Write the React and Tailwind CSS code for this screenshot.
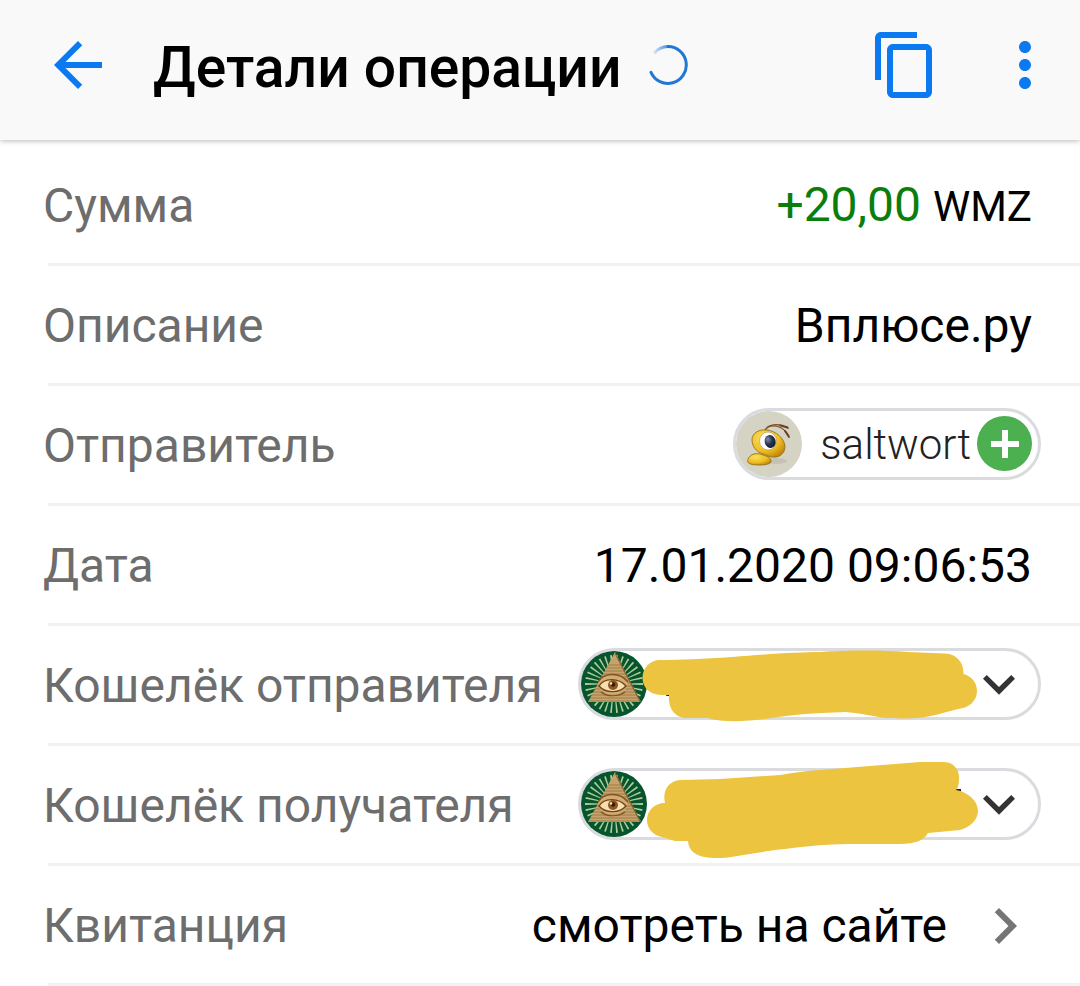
import React from 'react';
import {
  MdArrowBack,
  MdContentCopy,
  MdMoreVert,
  MdChevronRight,
  MdExpandMore,
} from 'react-icons/md';

const rays = Array.from({ length: 30 }, (_, i) => i * 12 + 6);
const courses = [14, 17, 20, 23, 26, 29, 32, 35, 38, 41, 44, 47, 50];

function Spinner() {
  return (
    <svg viewBox="0 0 42 42" className="size-[42px]" fill="none" role="img" aria-label="Загрузка">
      <defs>
        <linearGradient id="tail" gradientUnits="userSpaceOnUse" x1="6" y1="10" x2="26" y2="3">
          <stop offset="0" stopColor="#1f78d6" stopOpacity="0.1" />
          <stop offset="1" stopColor="#1f78d6" />
        </linearGradient>
      </defs>
      <path d="M7 9.5A18.4 18.4 0 0 1 21 2.6" stroke="url(#tail)" strokeWidth="3" />
      <path d="M21 2.6A18.4 18.4 0 1 1 4 28.3" stroke="#1f78d6" strokeWidth="3" strokeLinecap="round" />
    </svg>
  );
}

function BeeAvatar() {
  return (
    <svg viewBox="0 0 66 66" className="size-[66px] shrink-0" aria-hidden="true">
      <defs>
        <radialGradient id="beeHead" cx="0.35" cy="0.3" r="0.8">
          <stop offset="0" stopColor="#fbe05a" />
          <stop offset="0.6" stopColor="#eebd22" />
          <stop offset="1" stopColor="#b98208" />
        </radialGradient>
        <radialGradient id="beePupil" cx="0.35" cy="0.3" r="0.8">
          <stop offset="0" stopColor="#7d8da8" />
          <stop offset="0.5" stopColor="#26324e" />
          <stop offset="1" stopColor="#10182c" />
        </radialGradient>
      </defs>
      <circle cx="33" cy="33" r="33" fill="#d5d3c4" />
      <ellipse cx="40" cy="50" rx="11" ry="3" fill="#bab8a9" opacity="0.6" />
      <path d="M12 48c2-5 9-7 15-4 3 1 8 2 8 6 0 3-5 4-12 4S10 53 12 48Z" fill="url(#beeHead)" stroke="#8c6a16" strokeWidth="0.8" />
      <path d="M16 29c0-7 7-11 15-10 9 1 17 8 18 16 0 8-6 12-13 11-3 0-5-2-9-3-7-2-11-8-11-14Z" fill="url(#beeHead)" stroke="#8c6a16" strokeWidth="0.8" />
      <ellipse cx="32" cy="30" rx="8.500" ry="9" fill="#fff" stroke="#a8955c" strokeWidth="0.6" />
      <ellipse cx="34" cy="30.500" rx="5.500" ry="6.500" transform="rotate(-15 34 30)" fill="url(#beePupil)" />
      <path d="M29 19c3-6 12-7 23-3M29 19c5-7 18-5 24 6" fill="none" stroke="#7a4c28" strokeWidth="1.1" />
      <path d="M44 14.500l8 2.500M49 20l4 6" fill="none" stroke="#6a3e20" strokeWidth="1.800" strokeLinecap="round" />
    </svg>
  );
}

function EyeAvatar() {
  return (
    <svg viewBox="0 0 66 66" className="size-[66px] shrink-0" aria-hidden="true">
      <defs>
        <clipPath id="emblemTriangle">
          <path d="M34 1 60 51H7Z" />
        </clipPath>
      </defs>
      <circle cx="33" cy="33" r="33" fill="#07552f" />
      {rays.map((angle) => (
        <path
          key={angle}
          d="M33 33 32.100 4h1.800Z"
          fill="#b4d09a"
          transform={`rotate(${angle} 33 33)`}
        />
      ))}
      <path d="M34 1 60 51H7Z" fill="#c7a26c" />
      <g clipPath="url(#emblemTriangle)">
        {courses.map((y) => (
          <path key={y} d={`M4 ${y}H62`} stroke="#94733f" strokeWidth="0.8" />
        ))}
        <path d="M34 1 60 51" stroke="#7d5a2c" strokeWidth="2" />
      </g>
      <path d="M17 32c5-10 22-12 30 0l-3 7c-7 6-17 6-24 0Z" fill="#d3ab75" />
      <path d="M17 31c5-9 21-11 30 0" fill="none" stroke="#80521f" strokeWidth="1.400" />
      <path d="M18 35c5-8 19-9 27 0-6 7-20 8-27 0Z" fill="#f6dfac" stroke="#714717" strokeWidth="1.400" />
      <circle cx="32" cy="34" r="5" fill="#8c5722" />
      <circle cx="32" cy="33.500" r="2.300" fill="#3a1c08" />
      <circle cx="30" cy="32.500" r="1.200" fill="#fff0c8" />
      <path d="M20 41c6 5 17 5 24 0" fill="none" stroke="#80521f" strokeWidth="1.200" />
    </svg>
  );
}

// Marker strokes that cover the wallet numbers, in the chip's own coordinates
const markers = {
  sender: {
    ink: 'M88 48l4-8h4l-2 8Z',
    cover:
      'M82 12C103 12 125 11 154 9C190 6 220 4 242 4C270 2 305 2 330 4L367 5.500C379 6 386 15 385.500 26C394 28 399 35 399 43C399 53 391 60 380 61C365 65 355 68 345 69.500C330 71 315 70.500 303 69.500C290 67 280 65 268 64C235 65 210 67 190 70.500C170 73.500 145 75 130 70H106C96 68 90 60 91 47H82C71 46 64.500 39 64.500 30C64.500 20 72 12 82 12Z',
  },
  receiver: {
    ink: 'M374 21h9v3h-9Z',
    cover:
      'M102 12L142 11L202 7C215 5 225 3 242 2L342-6H366C376-6 382 3 381 11C381 16 380 20 378 22C390 24 400 33 400 43C400 53 390 60 382 62L350 65C346 72 338 76 322 76H272C240 76 215 80 190 83L150 89.500C125 92 111 87 110 73H97L84 69C74 67 69 60 69 52C69 43 76 35 87 35C84 22 91 13 102 12Z',
  },
};

function WalletChip({ marker, label }) {
  return (
    <button
      type="button"
      aria-haspopup="menu"
      aria-label={label}
      className="relative mb-1 flex h-[72px] w-[463px] items-center justify-between rounded-full border-[3px] border-[#dadbdf] pr-[7px]"
    >
      <EyeAvatar />
      <MdExpandMore className="size-16 text-[#333]" />
      <svg
        viewBox="0 0 463 72"
        className="absolute -top-[3px] -left-[3px] h-[72px] w-[463px] overflow-visible"
        aria-hidden="true"
      >
        <path d={marker.ink} fill="#222" />
        <path d={marker.cover} fill="#edc440" />
      </svg>
    </button>
  );
}

function Row({ label, wide, children }) {
  return (
    <div className={`ml-12 flex h-[120px] items-center justify-between border-b-[3px] border-[#f2f2f2] pt-[2px] ${wide ? 'pr-[39px]' : 'pr-12'}`}>
      <dt className="-ml-[5px] whitespace-nowrap text-[#6d6d6d]">{label}</dt>
      <dd className="whitespace-nowrap">{children}</dd>
    </div>
  );
}

function App() {
  return (
    <div className="bg-white font-['Roboto',sans-serif] text-[48px] leading-[56px] text-black">
      <header className="flex h-[140px] items-center bg-[#f9f9f9] pr-[19px] pb-[10px] pl-[42px] text-[#0b7af0] shadow-[0_1px_5px_rgba(0,0,0,0.28)]">
        <button type="button" aria-label="Назад">
          <MdArrowBack className="size-[72px]" />
        </button>
        <h1 className="ml-[39px] pt-[6px] text-[57px] leading-[64px] font-medium whitespace-nowrap text-black">
          Детали операции
        </h1>
        <div className="ml-[26px]">
          <Spinner />
        </div>
        <button type="button" aria-label="Копировать" className="ml-auto">
          <MdContentCopy className="size-[72px]" />
        </button>
        <button type="button" aria-label="Ещё" className="ml-12">
          <MdMoreVert className="size-[72px]" />
        </button>
      </header>

      <dl className="pt-[6px]">
        <Row label="Сумма">
          <span className="text-[#0a7d0a]">+20,00</span>{' '}
          <span className="text-[42px]">WMZ</span>
        </Row>
        <Row label="Описание">Вплюсе.ру</Row>
        <Row label="Отправитель" wide>
          <div className="mb-1 flex h-[72px] items-center rounded-full border-[3px] border-[#dadbdf] pr-[6px]">
            <BeeAvatar />
            <span className="ml-[18px] pt-[3px] text-[42px] font-light text-[#222]">saltwort</span>
            <button
              type="button"
              aria-label="Добавить"
              className="ml-[6px] flex size-[55px] items-center justify-center rounded-full bg-[#4caf50]"
            >
              <svg viewBox="0 0 28 28" className="size-7" aria-hidden="true">
                <path d="M14 0v28M0 14h28" stroke="#fff" strokeWidth="6" />
              </svg>
            </button>
          </div>
        </Row>
        <Row label="Дата">17.01.2020 09:06:53</Row>
        <Row label="Кошелёк отправителя" wide>
          <WalletChip marker={markers.sender} label="Кошелёк отправителя" />
        </Row>
        <Row label="Кошелёк получателя" wide>
          <WalletChip marker={markers.receiver} label="Кошелёк получателя" />
        </Row>
        <Row label="Квитанция" wide>
          <a href="#receipt" className="flex items-center">
            смотреть на сайте
            <MdChevronRight className="ml-[22px] size-[72px] text-[#757575]" />
          </a>
        </Row>
      </dl>
    </div>
  );
}

export default App;
